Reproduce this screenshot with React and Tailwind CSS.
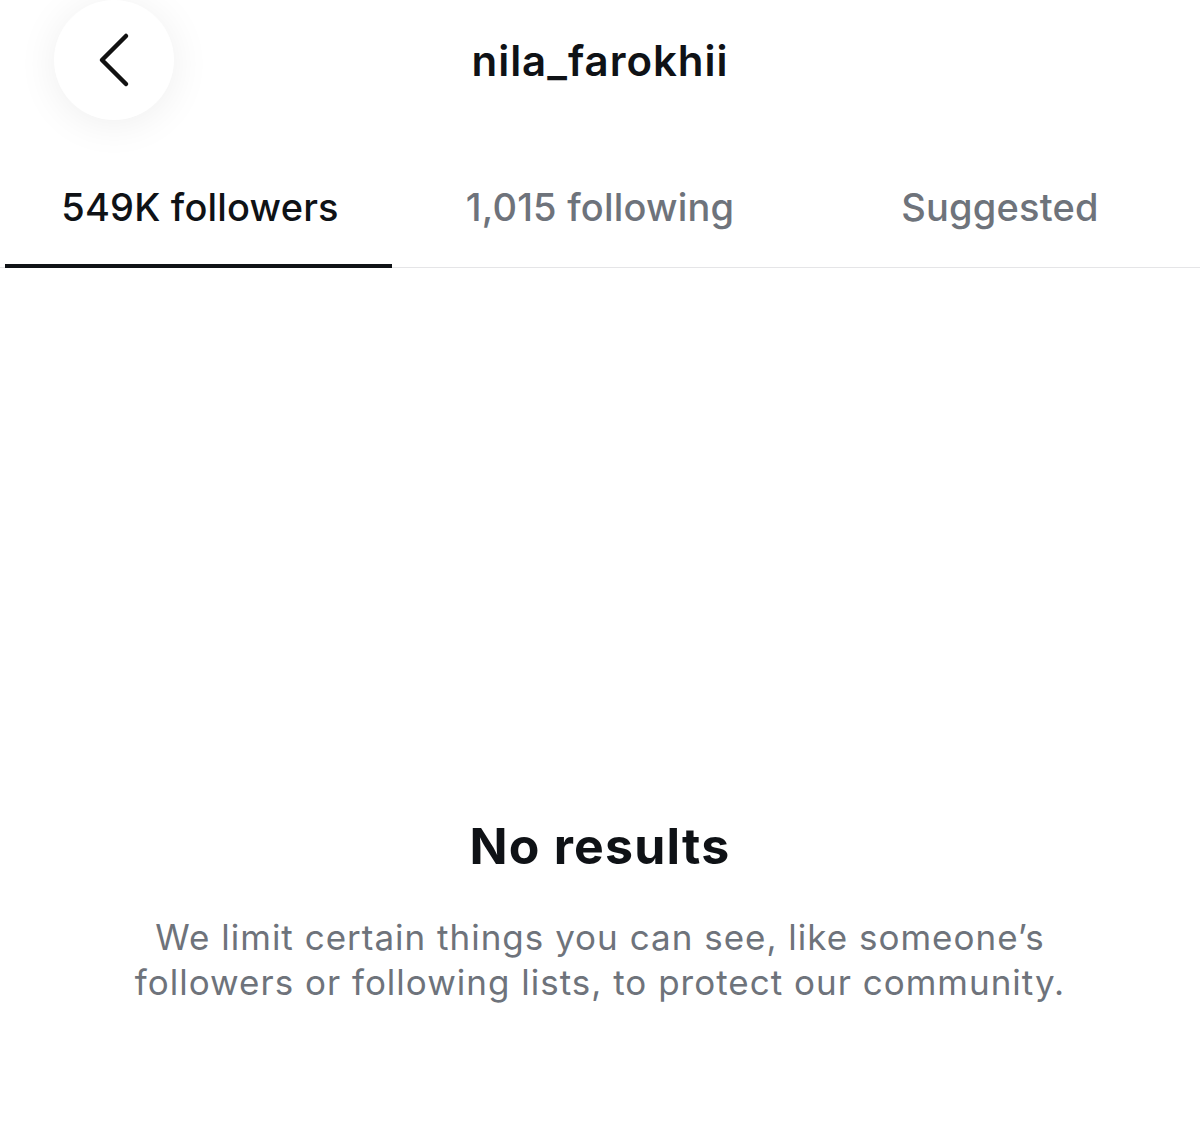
import React from "react";

const font = { fontFamily: "Inter, 'Noto Sans', Roboto, sans-serif" };

function BackButton() {
  return (
    <button className="flex h-[120px] w-[120px] items-center justify-center rounded-full bg-white shadow-[0_4px_40px_rgba(0,0,0,0.07)]">
      <svg width="36" height="56" viewBox="0 0 36 56" fill="none">
        <path d="M30 4 L6 28 L30 52" stroke="#111111" strokeWidth="4.5" strokeLinecap="round" strokeLinejoin="round" />
      </svg>
    </button>
  );
}

export default function App() {
  const tabs = ["549K followers", "1,015 following", "Suggested"];
  return (
    <div className="flex h-[1125px] w-[1200px] flex-col bg-white" style={font}>
      <header className="relative flex h-[122px] items-start justify-center">
        <div className="absolute left-[54px] top-0">
          <BackButton />
        </div>
        <h1 className="mt-[35px] text-[42px] font-semibold leading-[52px] tracking-[1px] text-[#0f1216]">
          nila_farokhii
        </h1>
      </header>
      <nav className="relative grid h-[146px] grid-cols-3 border-b border-[#e5e5e7]">
        {tabs.map((t, i) => (
          <div key={t} className="relative flex items-start justify-center pt-[60px]">
            <span
              className={
                "text-[38px] font-medium leading-[50px] tracking-[0.2px] " +
                (i === 0 ? "text-[#0f1216]" : "text-[#6e737b]")
              }
            >
              {t}
            </span>
            {i === 0 && (
              <div className="absolute bottom-[-1px] left-[5px] right-[8px] h-[4px] bg-[#0f1216]" />
            )}
          </div>
        ))}
      </nav>
      <main className="flex flex-col items-center pt-[548px]">
        <h2 className="text-[50px] font-bold leading-[60px] tracking-[1.2px] text-[#0f1216]">No results</h2>
        <p className="mt-[39px] text-center text-[35px] leading-[45px] tracking-[1px] text-[#6e737b]">
          We limit certain things you can see, like someone’s
          <br />
          followers or following lists, to protect our community.
        </p>
      </main>
    </div>
  );
}
